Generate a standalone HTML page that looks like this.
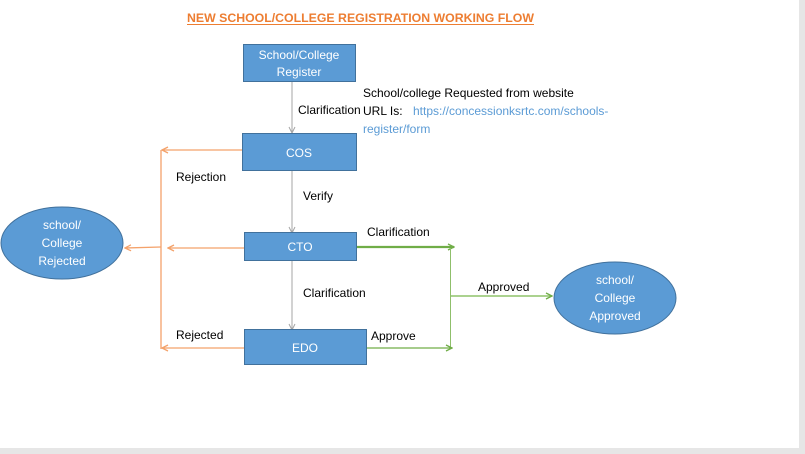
<!DOCTYPE html>
<html><head><meta charset="utf-8"><style>
html,body{margin:0;padding:0;background:#e6e6e6;}
svg{display:block;}
text{font-family:"Liberation Sans",sans-serif;font-size:12px;}
</style></head><body>
<svg width="805" height="454" viewBox="0 0 805 454" xmlns="http://www.w3.org/2000/svg">
<defs>
<marker id="ag" markerWidth="8" markerHeight="8" refX="7" refY="4" orient="auto" markerUnits="userSpaceOnUse"><path d="M1,1 L7,4 L1,7" fill="none" stroke="#a5a5a5" stroke-width="1"/></marker>
<marker id="ao" markerWidth="8" markerHeight="8" refX="7" refY="4" orient="auto" markerUnits="userSpaceOnUse"><path d="M1,1 L7,4 L1,7" fill="none" stroke="#f4a26b" stroke-width="1.3"/></marker>
<marker id="agr" markerWidth="8" markerHeight="8" refX="7" refY="4" orient="auto" markerUnits="userSpaceOnUse"><path d="M1,1 L7,4 L1,7" fill="none" stroke="#70ad47" stroke-width="1.3"/></marker>
</defs>
<rect x="0" y="0" width="799" height="448" fill="#fff"/>
<text x="187" y="22" fill="#ed7d31" font-weight="bold" font-size="11.5" textLength="347" lengthAdjust="spacingAndGlyphs">NEW SCHOOL/COLLEGE REGISTRATION WORKING FLOW</text>
<line x1="187" y1="24.5" x2="534" y2="24.5" stroke="#ed7d31" stroke-width="1"/>
<!-- gray arrows -->
<line x1="292" y1="81" x2="292" y2="133" stroke="#a5a5a5" marker-end="url(#ag)"/>
<line x1="292" y1="170" x2="292" y2="233" stroke="#a5a5a5" marker-end="url(#ag)"/>
<line x1="292" y1="260" x2="292" y2="330" stroke="#a5a5a5" marker-end="url(#ag)"/>
<!-- orange -->
<line x1="161" y1="150" x2="161" y2="349" stroke="#f4a26b" stroke-width="1.3"/>
<line x1="242" y1="150" x2="162" y2="150" stroke="#f4a26b" stroke-width="1.3" marker-end="url(#ao)"/>
<line x1="244" y1="248" x2="168" y2="248" stroke="#f4a26b" stroke-width="1.3" marker-end="url(#ao)"/>
<line x1="161" y1="247" x2="125" y2="248" stroke="#f4a26b" stroke-width="1.3" marker-end="url(#ao)"/>
<line x1="244" y1="348" x2="162" y2="348" stroke="#f4a26b" stroke-width="1.3" marker-end="url(#ao)"/>
<!-- green -->
<line x1="356" y1="247" x2="454" y2="247" stroke="#70ad47" stroke-width="2.2" marker-end="url(#agr)"/>
<line x1="450.5" y1="248" x2="450.5" y2="348" stroke="#8fbf6b" stroke-width="1"/>
<line x1="366" y1="348" x2="452" y2="348" stroke="#70ad47" stroke-width="1.3" marker-end="url(#agr)"/>
<line x1="451" y1="296" x2="552" y2="296" stroke="#8fc36a" stroke-width="1.6" marker-end="url(#agr)"/>
<!-- boxes -->
<g fill="#5b9bd5" stroke="#41719c" stroke-width="1">
<rect x="243.5" y="44.5" width="112" height="37"/>
<rect x="242.5" y="133.5" width="114" height="37"/>
<rect x="244.5" y="232.5" width="112" height="28"/>
<rect x="244.5" y="329.5" width="122" height="35"/>
<ellipse cx="62" cy="243" rx="61" ry="36"/>
<ellipse cx="615" cy="298" rx="61" ry="36"/>
</g>
<g fill="#fff" text-anchor="middle">
<text x="299" y="59">School/College</text>
<text x="299" y="76">Register</text>
<text x="299" y="157">COS</text>
<text x="300" y="251">CTO</text>
<text x="305" y="352">EDO</text>
<text x="62" y="229">school/</text>
<text x="62" y="247">College</text>
<text x="62" y="265">Rejected</text>
<text x="615" y="284">school/</text>
<text x="615" y="302">College</text>
<text x="615" y="320">Approved</text>
</g>
<g fill="#000">
<text x="298" y="114">Clarification</text>
<text x="363" y="97">School/college Requested from website</text>
<text x="363" y="115">URL Is:</text>
<text x="176" y="181">Rejection</text>
<text x="303" y="200">Verify</text>
<text x="367" y="236">Clarification</text>
<text x="303" y="297">Clarification</text>
<text x="478" y="291">Approved</text>
<text x="176" y="339">Rejected</text>
<text x="371" y="340">Approve</text>
</g>
<g fill="#5b9bd5">
<text x="413" y="115">https://concessionksrtc.com/schools-</text>
<text x="363" y="133">register/form</text>
</g>
</svg>
</body></html>
